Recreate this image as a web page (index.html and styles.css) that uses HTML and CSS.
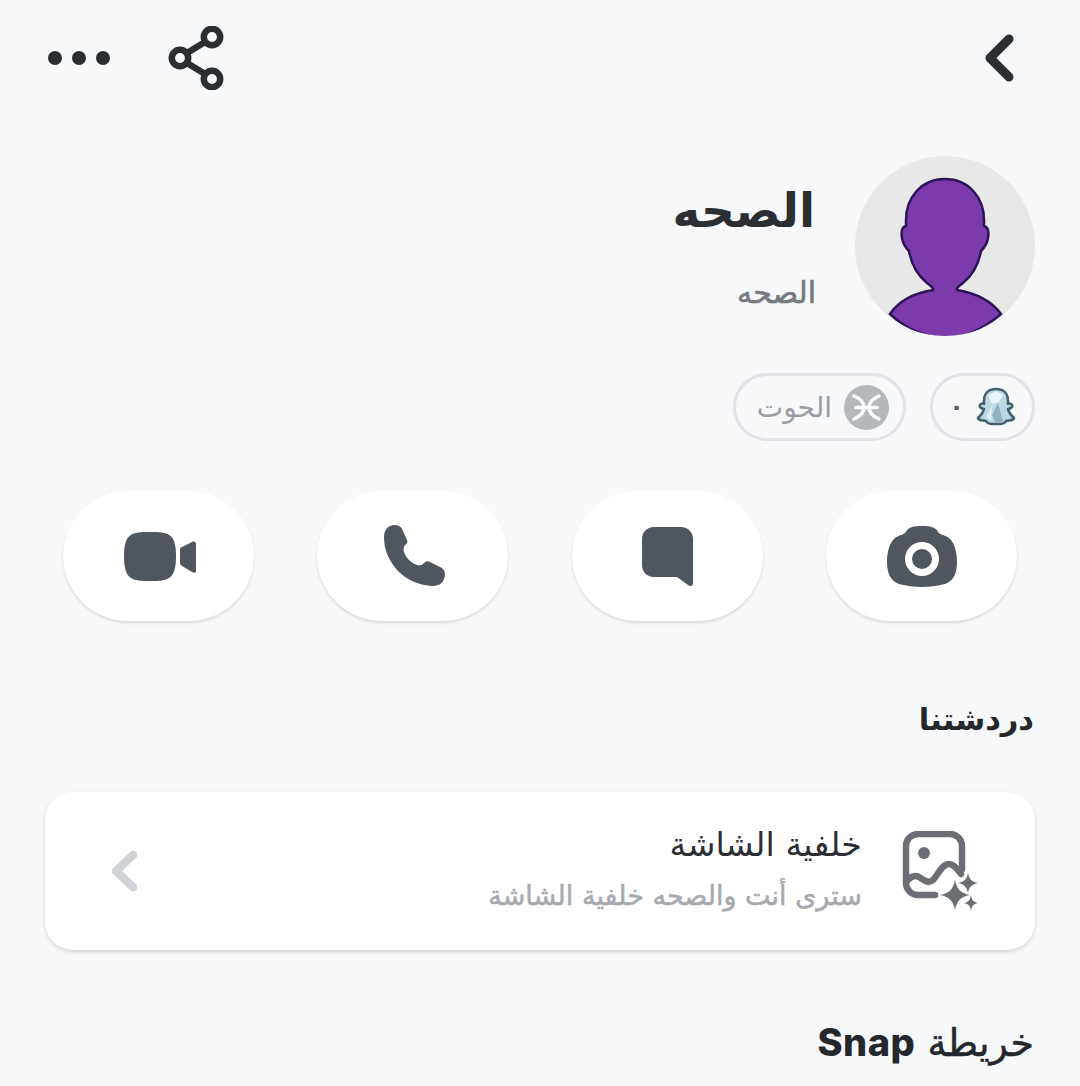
FILE: index.html
```html
<!DOCTYPE html>
<html lang="ar" dir="rtl">
<head>
  <meta charset="UTF-8">
  <title>الصحه</title>
  <link rel="stylesheet" href="styles.css">
</head>
<body>
  <!-- الشريط العلوي -->
  <header class="topbar">
    <svg class="back-icon" width="30" height="48" viewBox="0 0 30 48">
      <polyline points="25,5 6,24 25,43" fill="none" stroke="#2b2e33" stroke-width="9" stroke-linecap="round" stroke-linejoin="round"/>
    </svg>
    <div class="topbar-actions">
      <svg width="56" height="64" viewBox="0 0 56 64">
        <g fill="none" stroke="#2b2e33" stroke-width="6.5">
          <line x1="19" y1="27" x2="37" y2="16"/>
          <line x1="19" y1="37" x2="37" y2="48"/>
          <circle cx="44" cy="11" r="8.2"/>
          <circle cx="12" cy="32" r="8.2"/>
          <circle cx="44" cy="53" r="8.2"/>
        </g>
      </svg>
      <svg width="62" height="14" viewBox="0 0 62 14">
        <g fill="#2b2e33">
          <circle cx="7" cy="7" r="7"/>
          <circle cx="31" cy="7" r="7"/>
          <circle cx="55" cy="7" r="7"/>
        </g>
      </svg>
    </div>
  </header>

  <!-- الملف الشخصي -->
  <section class="profile">
    <svg class="avatar" width="180" height="180" viewBox="0 0 180 180">
      <defs><clipPath id="avatarClip"><circle cx="90" cy="90" r="90"/></clipPath></defs>
      <circle cx="90" cy="90" r="90" fill="#e8e8e9"/>
      <path clip-path="url(#avatarClip)" fill="#7d3aab" stroke="#2b1458" stroke-width="2.5" d="M90 23C66 23 51 42 51 64V70C47 71 46 76 47 82C48 89 51 92 54 95C56 106 61 118 72 127C76 130 79 132 78 134C60 137 45 143 35 158C50 172 70 182 90 182C110 182 130 172 146 158C135 143 120 137 102 134C101 132 104 130 108 127C119 118 124 106 126 95C129 92 132 89 133 82C134 76 133 71 129 70V64C129 42 114 23 90 23Z"/>
    </svg>
    <div class="profile-names">
      <h1 class="profile-name">الصحه</h1>
      <div class="profile-user">الصحه</div>
    </div>
  </section>

  <div class="pills">
    <div class="pill pill-score">
      <svg width="40" height="40" viewBox="0 0 40 40">
        <path fill="#bcd8e3" stroke="#45606c" stroke-width="2.5" stroke-linejoin="round" d="M20 2C12 2 8 7 8 14V17C6 16 3 17 4 20C5 21 6 22 8 22C7 27 4 29 2 31C3 34 7 33 10 34C12 38 16 37 20 37C24 37 28 38 30 34C33 33 37 34 38 31C36 29 33 27 32 22C34 22 35 21 36 20C37 17 34 16 32 17V14C32 7 28 2 20 2Z"/>
        <path fill="#eaf5f9" d="M12 8L20 4L27 8L23 15L16 17Z"/>
        <path fill="#8fb0bf" d="M22 16L27 34L20 36L16 28Z"/>
        <path fill="#e4f1f6" d="M16 18L10 30L15 34Z"/>
      </svg>
      <span class="pill-num">٠</span>
    </div>
    <div class="pill pill-sign">
      <svg width="45" height="45" viewBox="0 0 45 45">
        <circle cx="22.5" cy="22.5" r="22.5" fill="#b4b8bd"/>
        <g fill="none" stroke="#fff" stroke-width="3.5" stroke-linecap="round">
          <path d="M10 11C17 14 20 18 20 22.5C20 27 17 31 10 34"/>
          <path d="M35 11C28 14 25 18 25 22.5C25 27 28 31 35 34"/>
          <line x1="12" y1="22.5" x2="33" y2="22.5"/>
        </g>
      </svg>
      <span class="pill-label">الحوت</span>
    </div>
  </div>

  <!-- الأزرار -->
  <div class="actions">
    <div class="action-btn">
      <svg width="70" height="61" viewBox="0 0 70 61">
        <path fill-rule="evenodd" fill="#50565d" d="M35 0C43 0 49 1 51 6C53 9 58 9 62 12C67 16 70 25 70 36C70 48 66 55 58 58C50 60 43 61 35 61C27 61 20 60 12 58C4 55 0 48 0 36C0 25 3 16 8 12C12 9 17 9 19 6C21 1 27 0 35 0ZM35 16A17 17 0 1 0 35 50A17 17 0 1 0 35 16ZM35 23A10 10 0 1 1 35 43A10 10 0 1 1 35 23Z"/>
      </svg>
    </div>
    <div class="action-btn">
      <svg width="51" height="59" viewBox="0 0 51 59">
        <path fill="#50565d" d="M12 0H39C46 0 51 5 51 12V56C51 59 49 60 46 58L35 50H12C5 50 0 45 0 38V12C0 5 5 0 12 0Z"/>
      </svg>
    </div>
    <div class="action-btn action-phone">
      <svg width="62" height="62" viewBox="0 0 62 62">
        <path fill="#50565d" d="M6 1C11 -1 16 0 18 4L23 15C24 17 23 19 21 20C20 21 19 24 20 27C22 33 27 38 33 40C36 41 38 40 40 38C42 36 44 36 46 37L56 42C61 44 62 49 60 54C58 59 54 61 48 61C36 60 24 56 14 46C5 36 0 25 0 12C0 7 2 3 6 1Z"/>
      </svg>
    </div>
    <div class="action-btn action-video">
      <svg width="72" height="49" viewBox="0 0 72 49">
        <path fill="#50565d" d="M26 0C44 0 52 1 52 24C52 48 44 49 26 49C8 49 0 48 0 24C0 1 8 0 26 0Z"/>
        <path fill="#50565d" d="M56 18C56 16 57 15 58 15L68 10C70 9 72 10 72 12V39C72 41 70 41 68 40L58 34C57 33 56 32 56 31Z"/>
      </svg>
    </div>
  </div>

  <!-- دردشتنا -->
  <h2 class="section-title section-chat">دردشتنا</h2>
  <div class="card">
    <svg class="card-icon" width="76" height="80" viewBox="0 0 76 80">
      <g fill="none" stroke="#6b6f75" stroke-width="6.5" stroke-linecap="round">
        <path d="M60 38V15A12 12 0 0 0 48 3H16A12 12 0 0 0 4 15V52A12 12 0 0 0 16 64H33"/>
        <path d="M5 50C9 45 13 44 17 46C22 49 26 53 31 49C36 44 40 33 47 33C52 33 55 38 59 43"/>
      </g>
      <circle cx="22" cy="22" r="6" fill="#6b6f75"/>
      <path fill="#6b6f75" d="M53 49C55 58 58 62 68 64C58 66 55 70 53 79C51 70 48 66 38 64C48 62 51 58 53 49Z"/>
      <path fill="#6b6f75" d="M66 42C67 48 70 51 76 52C70 53 67 56 66 62C65 56 62 53 56 52C62 51 65 48 66 42Z"/>
      <path fill="#6b6f75" d="M69 64C70 69 71 71 76 72C71 73 70 75 69 80C68 75 67 73 62 72C67 71 68 69 69 64Z"/>
    </svg>
    <div class="card-text">
      <div class="card-title">خلفية الشاشة</div>
      <div class="card-sub">سترى أنت والصحه خلفية الشاشة</div>
    </div>
    <svg class="card-arrow" width="28" height="42" viewBox="0 0 28 42">
      <polyline points="23,5 6,21 23,37" fill="none" stroke="#cfd3d8" stroke-width="8.5" stroke-linecap="round" stroke-linejoin="round"/>
    </svg>
  </div>

  <h2 class="section-title section-map">خريطة <span class="latin">Snap</span></h2>
</body>
</html>
```

FILE: styles.css
```css
body {
  margin: 0;
  height: 1086px;
  overflow: hidden;
  background-color: #f7f8fa;
  font-family: "DejaVu Sans", sans-serif;
  color: #24272b;
}

.topbar {
  display: flex;
  justify-content: space-between;
  align-items: center;
  height: 64px;
  padding: 26px 66px 0 48px;
}

.topbar-actions {
  display: flex;
  align-items: center;
  gap: 58px;
}

.profile {
  display: flex;
  margin-top: 66px;
  padding: 0 45px;
}

.avatar {
  flex: none;
}

.profile-names {
  margin-right: 40px;
}

.profile-name {
  margin: 25px 0 0;
  font-size: 47px;
  line-height: 60px;
  font-weight: 700;
  color: #2b2e33;
}

.profile-user {
  margin-top: 34px;
  margin-right: -1px;
  font-size: 30px;
  line-height: 36px;
  font-weight: 400;
  -webkit-text-stroke: 0.7px #777b81;
  color: #777b81;
}

.pills {
  display: flex;
  gap: 24px;
  margin-top: 37px;
  padding: 0 45px;
}

.pill {
  display: flex;
  align-items: center;
  height: 68px;
  box-sizing: border-box;
  border: 3px solid #e1e3e6;
  border-radius: 34px;
}

.pill-score {
  width: 105px;
  padding: 0 16px;
  gap: 12px;
}

.pill-sign {
  width: 173px;
  padding: 0 14px;
  gap: 12px;
}

.pill-num {
  font-size: 24px;
  font-weight: 700;
  color: #55595f;
}

.pill-label {
  font-size: 28px;
  color: #9a9da2;
}

.actions {
  display: flex;
  justify-content: space-between;
  margin-top: 50px;
  padding: 0 63px;
}

.action-btn {
  display: flex;
  align-items: center;
  justify-content: center;
  width: 191px;
  height: 130px;
  background: #fff;
  border-radius: 65px;
  box-shadow: 0 2px 3px rgba(0, 0, 0, 0.12);
}

.action-phone svg {
  margin-right: -4px;
}

.action-video svg {
  margin-right: -2px;
}

.section-title {
  margin: 0;
  padding: 0 46px;
  font-size: 30.5px;
  line-height: 44px;
  font-weight: 700;
  color: #24272b;
}

.section-chat {
  margin-top: 77px;
}

.section-map {
  margin-top: 70px;
  font-size: 38px;
  font-weight: 400;
  -webkit-text-stroke: 0.5px #24272b;
}

.latin {
  font-family: Inter, sans-serif;
  font-size: 38px;
  font-weight: 800;
  letter-spacing: 0.5px;
  -webkit-text-stroke: 0;
}

.card {
  display: flex;
  align-items: center;
  height: 158px;
  margin: 50px 45px 0;
  background: #fff;
  border-radius: 28px;
  box-shadow: 0 2px 4px rgba(0, 0, 0, 0.14);
}

.card-icon {
  flex: none;
  margin-right: 57px;
}

.card-text {
  flex: 1;
  margin-right: 40px;
}

.card-title {
  margin-top: -6px;
  font-size: 33.4px;
  line-height: 44px;
  color: #2b2e33;
}

.card-sub {
  margin-top: 12px;
  font-size: 27px;
  line-height: 34px;
  -webkit-text-stroke: 0.5px #a6a9ad;
  color: #a6a9ad;
}

.card-arrow {
  flex: none;
  margin-left: 65px;
}
```
